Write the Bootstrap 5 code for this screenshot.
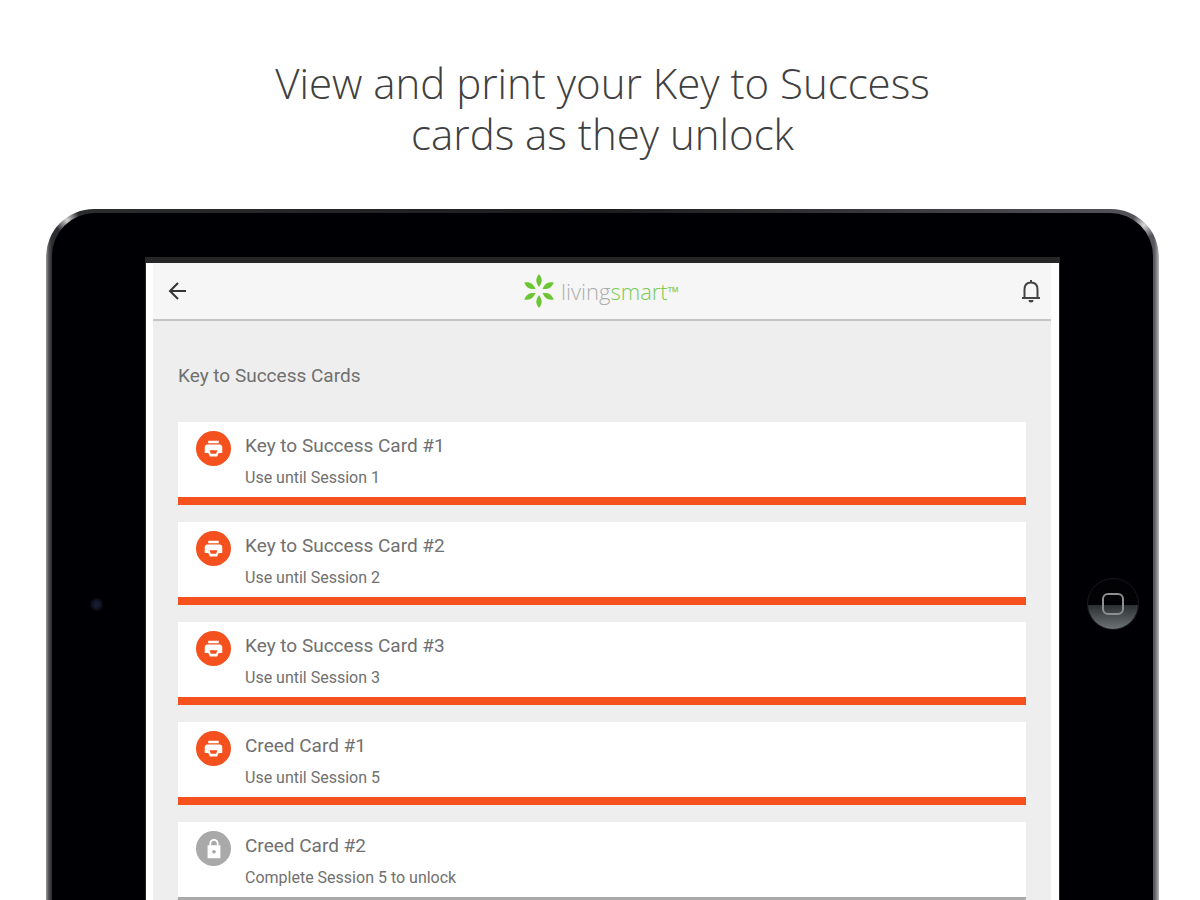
<!DOCTYPE html>
<html lang="en">
<head>
<meta charset="utf-8">
<meta name="viewport" content="width=device-width, initial-scale=1">
<title>livingsmart – Key to Success Cards</title>
<link href="https://cdn.jsdelivr.net/npm/bootstrap@5.3.0/dist/css/bootstrap.min.css" rel="stylesheet">
<style>
  body { background: #fff; font-family: Roboto, "Liberation Sans", sans-serif; color: #707070; }
  .intro { padding: 57px 41px 50px 46px; }
  .headline { font: 300 42px/51px "Open Sans", sans-serif; color: #404040; max-width: 700px; }
  .stage { padding-left: 46px; padding-right: 41px; }
  .tablet { min-height: 790px; border-radius: 48px; padding: 4px 6px;
    background:
      radial-gradient(circle at 21px 11px, #d8d8d8 0, #d8d8d800 13px),
      radial-gradient(circle at calc(100% - 15px) 16px, #d8d8d8 0, #d8d8d800 13px),
      linear-gradient(to right, #9a9a9a 0, #4a4c4e 3px, #2c2d2f 6px, #1c1c1e 50%, #55555c calc(100% - 5px), #77777c calc(100% - 3px), #b8b8b8 100%); }
  .bezel { background: #000004; border-radius: 43px; }
  .rail { width: 93px; flex: none; }
  .lens { width: 13px; height: 13px; margin-right: 4px; border-radius: 50%; background: radial-gradient(#151d33 25%, #0b0c14 60%, #050508); }
  .home { width: 52px; height: 52px; margin-left: 12px; border-radius: 50%; border: 1px solid #17181a; background: linear-gradient(#020204 52%, #2b3033 53%, #6d7274 100%); }
  .home span { width: 22px; height: 22px; border: 2px solid #8c8e90; border-radius: 6px; }
  .screen { background: #fff; margin-top: 44px; border: solid #262626; border-width: 6px 1px 0; }
  .view { background: #eee; margin: 0 8px 0 7px; }
  .topbar { height: 58px; background: #f6f6f6; border-bottom: 2px solid #c4c4c4; padding: 0 8px 0 13px; }
  .tool { width: 24px; height: 26px; }
  .section-title { font-size: 19px; line-height: 24px; font-weight: 400; margin: 43px 0 34px; }
  .deck { padding: 0 25px 40px; }
  .deck ul { gap: 17px; }
  .key-card { background: #fff; border-bottom: 8px solid #f4511e; padding: 9px 18px 7px; min-height: 83px; gap: 14px; }
  .key-card.locked { border-color: #a9a9a9; }
  .disc { width: 35px; height: 35px; border-radius: 50%; background: #f4511e; flex: none; }
  .locked .disc { background: #a9a9a9; }
  .key-title { font-size: 19px; line-height: 30px; font-weight: 400; margin-bottom: 7px; }
  .key-note { font-size: 16px; line-height: 20px; }
</style>
</head>
<body>
<svg class="d-none" xmlns="http://www.w3.org/2000/svg">
  <symbol id="print" viewBox="0 0 24 24"><path fill="#fff" d="M19 7.500H5c-1.660 0-3 1.340-3 3V17h4l2 4h8l2-4h4v-6.500c0-1.660-1.340-3-3-3zM15 18H9l-1.500-4h9L15 18zM18 3H6v3h12V3z"/></symbol>
  <symbol id="lock" viewBox="0 0 24 24"><path fill="#fff" d="M19 8h-2V6c0-2.760-2.240-5-5-5S7 3.240 7 6v2H5v14h14V8zm-7 9c-1.100 0-2-.9-2-2s.9-2 2-2 2 .9 2 2-.9 2-2 2zm3.100-9H8.900V6c0-1.710 1.390-3.100 3.100-3.100s3.100 1.390 3.100 3.100v2z"/></symbol>
</svg>
<div class="vh-100 overflow-hidden">
  <div class="intro"><h1 class="headline mx-auto mb-0 text-center">View and print your Key to Success cards as they unlock</h1></div>
  <div class="stage">
    <div class="tablet d-flex">
      <div class="bezel d-flex flex-fill">
        <div class="rail d-flex align-items-center justify-content-center"><span class="lens"></span></div>
        <main class="screen flex-fill">
          <div class="view h-100">
            <header class="topbar d-flex align-items-center justify-content-between">
              <button class="btn p-0 border-0 tool d-flex align-items-center" aria-label="Back">
                <svg width="24" height="24" viewBox="0 0 24 24" fill="none" stroke="#333" stroke-width="2"><path d="M20 12H4.500M12 4L4 12l8 8"/></svg>
              </button>
              <a href="#" class="text-decoration-none d-flex" aria-label="livingsmart">
                <svg width="164" height="36" viewBox="0 0 164 36">
                  <g transform="translate(16 18)" fill="#6cc535">
                    <path id="petal" d="M0-17C3.800-12 3.400-9 0-4C-3.400-9-3.800-12 0-17Z"/>
                    <use href="#petal" transform="rotate(60)"/><use href="#petal" transform="rotate(120)"/><use href="#petal" transform="rotate(180)"/><use href="#petal" transform="rotate(240)"/><use href="#petal" transform="rotate(300)"/>
                  </g>
                  <text x="38" y="27" font-family="Open Sans" font-weight="300" font-size="22" fill="#adadad">living<tspan fill="#7ccb55">smart</tspan><tspan fill="#80cf5c" font-weight="600" font-size="15" dy="-2">™</tspan></text>
                </svg>
              </a>
              <button class="btn p-0 border-0 tool d-flex" aria-label="Notifications">
                <svg width="24" height="26" viewBox="0 0 24 26" fill="none" stroke="#444" stroke-width="2"><path d="M3 20h18M5.500 20V11.500C5.500 7 8 4.500 12 4.500s6.500 2.500 6.500 7V20M12 4.500V2"/><path fill="#444" stroke="none" d="M9.500 22h5a2.500 2.500 0 0 1-5 0z"/></svg>
              </button>
            </header>
            <section class="deck">
              <h2 class="section-title">Key to Success Cards</h2>
              <ul class="list-unstyled d-flex flex-column mb-0">
                <li class="key-card d-flex align-items-start">
                  <button class="btn p-0 border-0 disc d-flex align-items-center justify-content-center" aria-label="Print Key to Success Card #1"><svg width="21" height="21"><use href="#print"/></svg></button>
                  <div><h3 class="key-title">Key to Success Card #1</h3><p class="key-note mb-0">Use until Session 1</p></div>
                </li>
                <li class="key-card d-flex align-items-start">
                  <button class="btn p-0 border-0 disc d-flex align-items-center justify-content-center" aria-label="Print Key to Success Card #2"><svg width="21" height="21"><use href="#print"/></svg></button>
                  <div><h3 class="key-title">Key to Success Card #2</h3><p class="key-note mb-0">Use until Session 2</p></div>
                </li>
                <li class="key-card d-flex align-items-start">
                  <button class="btn p-0 border-0 disc d-flex align-items-center justify-content-center" aria-label="Print Key to Success Card #3"><svg width="21" height="21"><use href="#print"/></svg></button>
                  <div><h3 class="key-title">Key to Success Card #3</h3><p class="key-note mb-0">Use until Session 3</p></div>
                </li>
                <li class="key-card d-flex align-items-start">
                  <button class="btn p-0 border-0 disc d-flex align-items-center justify-content-center" aria-label="Print Creed Card #1"><svg width="21" height="21"><use href="#print"/></svg></button>
                  <div><h3 class="key-title">Creed Card #1</h3><p class="key-note mb-0">Use until Session 5</p></div>
                </li>
                <li class="key-card locked d-flex align-items-start">
                  <span class="disc d-flex align-items-center justify-content-center"><svg width="22" height="22"><use href="#lock"/></svg></span>
                  <div><h3 class="key-title">Creed Card #2</h3><p class="key-note mb-0">Complete Session 5 to unlock</p></div>
                </li>
              </ul>
            </section>
          </div>
        </main>
        <div class="rail d-flex align-items-center justify-content-center"><button class="btn p-0 home d-flex align-items-center justify-content-center" aria-label="Home"><span></span></button></div>
      </div>
    </div>
  </div>
</div>
<script src="https://cdn.jsdelivr.net/npm/bootstrap@5.3.0/dist/js/bootstrap.bundle.min.js"></script>
</body>
</html>
